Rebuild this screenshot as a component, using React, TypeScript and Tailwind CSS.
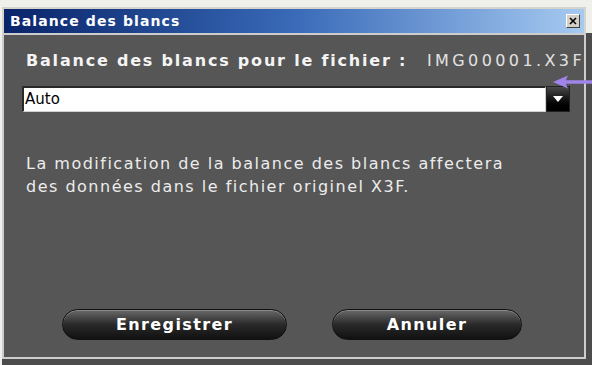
import React from "react";

export default function App() {
  const font = { fontFamily: '"DejaVu Sans", "Liberation Sans", sans-serif' };
  return (
    <div className="relative w-[592px] h-[365px] bg-[#efefeb] pt-[7px] pl-[2px] overflow-hidden" style={font}>
      <div className="flex flex-col w-[590px] h-[358px]">
        {/* title row */}
        <div className="flex h-[26px]">
          <div className="w-[584px] h-[26px] border-t-2 border-l-2 border-r-2 border-[#d6d3cc] bg-gradient-to-r from-[#0a246a] via-[#3a6ab8] to-[#a6caf0] flex items-center justify-between pl-[6px] pr-[4px]">
            <span className="text-white font-bold text-[14px] tracking-[1.1px] leading-none">Balance des blancs</span>
            <div className="w-[14px] h-[14px] bg-[#d4d0c8] border border-t-white border-l-white border-b-[#404040] border-r-[#404040] flex items-center justify-center">
              <svg width="8" height="8" viewBox="0 0 8 8">
                <path d="M1 1 L7 7 M7 1 L1 7" stroke="#000" strokeWidth="1.6" />
              </svg>
            </div>
          </div>
          <div className="flex-1" />
        </div>
        {/* body row */}
        <div className="flex-1 bg-[#4c4c4c] flex">
          <div className="w-[584px] h-[326px] border-t-2 border-l-2 border-r-2 border-b-2 border-[#cdcdcd] bg-[#565656] flex flex-col pl-[18px] pr-[14px]">
            <div className="flex items-baseline justify-between mt-[15px] ml-[4px] mr-[-12px]">
              <span className="text-[#f4f4f4] font-bold text-[16px] tracking-[1.8px] leading-[22px]">Balance des blancs pour le fichier :</span>
              <span className="text-[#e2e2e2] text-[16px] tracking-[3.4px] leading-[22px] mr-[-3px]">IMG00001.X3F</span>
            </div>
            <div className="flex mt-[14px] h-[26px]">
              <div className="flex-1 bg-white border-t-2 border-l-2 border-t-[#2a2a2a] border-l-[#2a2a2a] border-b border-r border-b-[#cfcfcf] border-r-[#cfcfcf] flex items-center pl-[1px]">
                <span className="text-black text-[15px] leading-none">Auto</span>
              </div>
              <div className="w-[24px] h-[26px] bg-gradient-to-b from-[#4a4a4a] via-[#151515] to-[#000000] border border-[#222] flex items-center justify-center">
                <svg width="10" height="6" viewBox="0 0 10 6">
                  <path d="M0 0 L10 0 L5 6 Z" fill="#ffffff" />
                </svg>
              </div>
            </div>
            <div className="mt-[40px] ml-[4px] text-[#ececec] text-[16px] tracking-[1.5px] leading-[23px]">
              <div>La modification de la balance des blancs affectera</div>
              <div>des données dans le fichier originel X3F.</div>
            </div>
            <div className="flex-1" />
            <div className="flex mb-[17px] ml-[40px]">
              <div className="w-[225px] h-[31px] rounded-full border border-[#111] bg-gradient-to-b from-[#6a6a6a] via-[#2a2a2a] to-[#111] shadow-[inset_0_1px_0_#888] flex items-center justify-center">
                <span className="text-white font-bold text-[16px] tracking-[1.4px] leading-none">Enregistrer</span>
              </div>
              <div className="w-[190px] h-[31px] ml-[45px] rounded-full border border-[#111] bg-gradient-to-b from-[#6a6a6a] via-[#2a2a2a] to-[#111] shadow-[inset_0_1px_0_#888] flex items-center justify-center">
                <span className="text-white font-bold text-[16px] tracking-[1.4px] leading-none">Annuler</span>
              </div>
            </div>
          </div>
        </div>
      </div>
      <svg className="absolute left-[550px] top-[74px]" width="42" height="16" viewBox="0 0 42 16">
        <path d="M10 8 L42 8" stroke="#a084ea" strokeWidth="3.5" />
        <path d="M3 8 L18 1.5 L15 8 L18 14.5 Z" fill="#a084ea" />
      </svg>
    </div>
  );
}
